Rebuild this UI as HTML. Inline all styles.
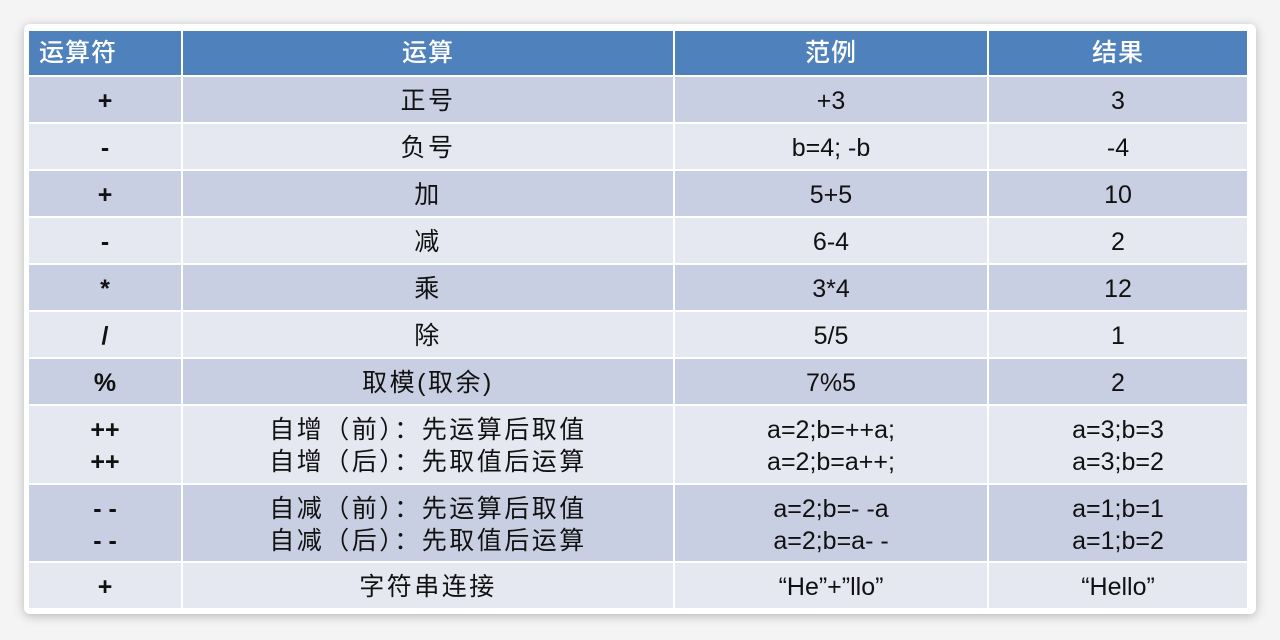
<!DOCTYPE html>
<html><head><meta charset="utf-8"><style>
body{margin:0;width:1280px;height:640px;background:#f4f4f4;position:relative;overflow:hidden;font-family:"Liberation Sans","Noto Sans CJK SC",sans-serif}
.card{position:absolute;left:24px;top:24px;width:1232px;height:590px;background:#fff;border-radius:6px;box-shadow:0 2px 10px rgba(0,0,0,.25)}
.t{position:absolute;left:29px;top:31px;display:grid;grid-template-columns:152px 490px 312px 258px;grid-template-rows:44px 45px 45px 45px 45px 45px 45px 45px 77px 76px 45px;gap:2px;background:#fff}
.t div{display:flex;align-items:center;justify-content:center;text-align:center;font-size:25px;color:#111;line-height:32px;padding-top:3px;box-sizing:border-box}
.t div.c{font-size:25px;letter-spacing:2.5px}
.h{background:#4f81bd;color:#fff!important;font-size:25px!important;font-weight:500;padding-top:0!important;letter-spacing:1px}
.d{background:#c9cfe2}.l{background:#e5e8f0}
.b{font-weight:bold}
</style></head><body>
<div class="card"></div>
<div class="t">
<div class="h" style="justify-content:flex-start;padding-left:10px">运算符</div><div class="h">运算</div><div class="h">范例</div><div class="h">结果</div>
<div class="d b">+</div><div class="d c">正号</div><div class="d">+3</div><div class="d">3</div>
<div class="l b">-</div><div class="l c">负号</div><div class="l">b=4; -b</div><div class="l">-4</div>
<div class="d b">+</div><div class="d c">加</div><div class="d">5+5</div><div class="d">10</div>
<div class="l b">-</div><div class="l c">减</div><div class="l">6-4</div><div class="l">2</div>
<div class="d b">*</div><div class="d c">乘</div><div class="d">3*4</div><div class="d">12</div>
<div class="l b">/</div><div class="l c">除</div><div class="l">5/5</div><div class="l">1</div>
<div class="d b">%</div><div class="d c">取模(取余)</div><div class="d">7%5</div><div class="d">2</div>
<div class="l b">++<br>++</div><div class="l c">自增（前）：先运算后取值<br>自增（后）：先取值后运算</div><div class="l">a=2;b=++a;<br>a=2;b=a++;</div><div class="l">a=3;b=3<br>a=3;b=2</div>
<div class="d b">- -<br>- -</div><div class="d c">自减（前）：先运算后取值<br>自减（后）：先取值后运算</div><div class="d">a=2;b=- -a<br>a=2;b=a- -</div><div class="d">a=1;b=1<br>a=1;b=2</div>
<div class="l b">+</div><div class="l c">字符串连接</div><div class="l">“He”+”llo”</div><div class="l">“Hello”</div>
</div>
</body></html>
